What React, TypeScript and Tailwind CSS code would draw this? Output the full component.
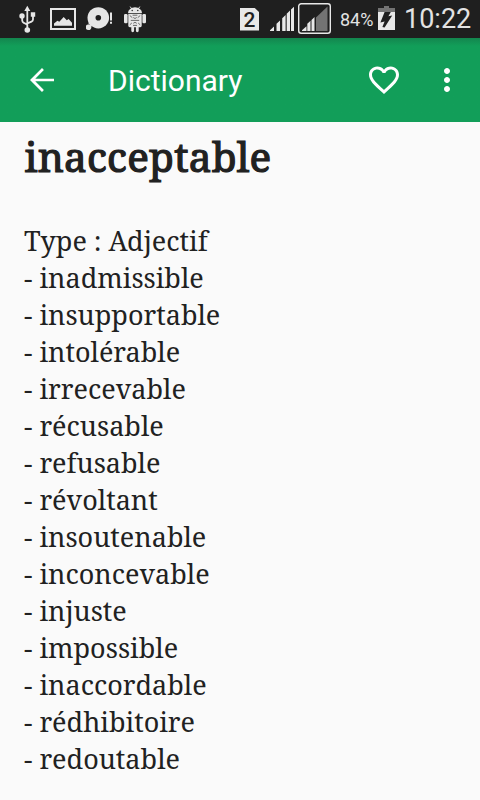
import React from "react";

const synonyms = [
  "inadmissible",
  "insupportable",
  "intolérable",
  "irrecevable",
  "récusable",
  "refusable",
  "révoltant",
  "insoutenable",
  "inconcevable",
  "injuste",
  "impossible",
  "inaccordable",
  "rédhibitoire",
  "redoutable",
];

function UsbIcon() {
  return (
    <svg className="ml-[18px] shrink-0" width="18" height="38" viewBox="18 0 18 38" fill="none" stroke="#e6e6e6" strokeWidth="1.8">
      <path d="M27.3 9v20M22.2 17v3.6q0 1.6 1.5 2.2l3.6 1.8M33 16v3.4q0 1.6-1.5 2.2l-4.2 1.8" />
      <path d="M27.3 5.8l3 5.2h-6z" fill="#e6e6e6" stroke="none" />
      <circle cx="22" cy="16" r="2.7" fill="#e6e6e6" stroke="none" />
      <circle cx="27.3" cy="30" r="2.8" fill="#e6e6e6" stroke="none" />
      <path d="M30.8 12.2h4.4v4.6h-4.4z" fill="#e6e6e6" stroke="none" />
    </svg>
  );
}

function PictureIcon() {
  return (
    <svg className="ml-[14px] shrink-0" width="26" height="38" viewBox="50 0 26 38" fill="#e6e6e6">
      <path fillRule="evenodd" d="M50 8h26v22H50zM52 10v18h22V10z" />
      <path d="M54 25.8v-2.4l3.4-2.6 1.9.9 4.4-4.7 3.1 3.2 1.8-1.2 3.4 3.7v3.1z" />
    </svg>
  );
}

function DiscIcon() {
  return (
    <svg className="ml-[10px] shrink-0" width="27" height="38" viewBox="86 0 27 38" fill="#e6e6e6">
      <ellipse cx="98.3" cy="17.8" rx="10.8" ry="10.6" />
      <circle cx="88.5" cy="27.2" r="2.8" />
      <path d="M88.6 18l2.7 6v3h-1.2v-2.5h-1.5z" />
      <circle cx="98.3" cy="17.8" r="2.8" fill="#1f1f1f" />
      <path d="M110 12.5h2v8h-2zM110 21.7h2v2h-2z" />
    </svg>
  );
}

function RobotIcon() {
  return (
    <svg className="ml-[11px] shrink-0" width="23" height="38" viewBox="124 0 23 38" fill="#e6e6e6">
      <path d="M128 13a7 5.8 0 0 1 14 0z" />
      <path d="M130.2 6.6l1.6 2.4M139.8 6.6l-1.6 2.4" stroke="#e6e6e6" strokeWidth="1" />
      <rect x="124" y="14" width="3.6" height="9.3" rx="1.2" />
      <rect x="142.4" y="14" width="3.6" height="9.3" rx="1.2" />
      <path d="M128.3 13.8h13.4v12q0 1.4-1.5 1.4h-1.5v3.6q0 1.4-1.4 1.4t-1.4-1.4v-3.6h-1.8v3.6q0 1.4-1.4 1.4t-1.4-1.4v-3.6h-1.5q-1.5 0-1.5-1.4z" />
      <circle cx="132.2" cy="10.5" r=".7" fill="#1f1f1f" />
      <circle cx="137.8" cy="10.5" r=".7" fill="#1f1f1f" />
      <path d="M129.8 15.5l2.5 2.2M140.2 15.5l-2.5 2.2M129.8 24.8l2-1.8M140.2 24.8l-2-1.8M132.6 15.2h4.8M130.8 20.4h8.4M133.3 17.5l1.7 1 1.7-1M133.3 23.3l1.7-1 1.7 1M133 25.4h4" stroke="#6a6a6a" strokeWidth="1" fill="none" />
    </svg>
  );
}

function SimIcon() {
  return (
    <div className="ml-auto flex h-[23px] w-[19px] items-center justify-center bg-[#e8e8e8] pt-[2px] text-[21px] leading-none font-medium text-[#1f1f1f] [clip-path:polygon(0_0,75%_0,100%_20%,100%_100%,0_100%)]">
      2
    </div>
  );
}

function SignalIcons() {
  return (
    <svg className="ml-[11px] shrink-0" width="61" height="38" viewBox="270 0 61 38">
      <path d="M270 31v-.8l4-3.6V31zM276.5 31v-7.3l3.5-3.3V31zM282.2 31V18.2l3.4-3.2v16zM286.7 31V13.8l3.3-3.2V31zM291 31V9.6l3-2.9V31z" fill="#e8e8e8" />
      <rect x="298.7" y="3.7" width="31.6" height="29.6" rx="2.5" fill="none" stroke="#e8e8e8" strokeWidth="1.4" />
      <path d="M316 31V17.5L327.5 6.5V31z" fill="#737373" />
      <path d="M302 31v-.8l4.5-4V31zM307.3 31v-7.3l3.2-3V31zM311.5 31V20l3-3v14z" fill="#e8e8e8" />
    </svg>
  );
}

function BatteryIcon() {
  return (
    <svg className="ml-[5px] shrink-0" width="17" height="38" viewBox="378 0 17 38">
      <path d="M378 12h17v18h-17z" fill="#e8e8e8" />
      <path d="M378 8h6V6h5v2h6v4h-17z" fill="#737373" />
      <path d="M384.6 12h6.2l-2.4 4.2 3.8-.6-7.6 11.9-2.2-.6 2.2-5.3-4.2.8z" fill="#1f1f1f" />
    </svg>
  );
}

function StatusBar() {
  return (
    <div className="flex h-[38px] shrink-0 items-center bg-[#1f1f1f] text-[#e3e3e3]">
      <UsbIcon />
      <PictureIcon />
      <DiscIcon />
      <RobotIcon />
      <SimIcon />
      <SignalIcons />
      <span className="ml-[9px] w-[33px] pt-[2px] text-[18px] leading-none whitespace-nowrap">84%</span>
      <BatteryIcon />
      <span className="ml-[9px] w-[76px] text-[27px] leading-none whitespace-nowrap">10:22</span>
    </div>
  );
}

function AppBar() {
  return (
    <header className="flex h-[84px] shrink-0 items-center bg-[#129e59] bg-linear-to-b from-[#13864e] to-[#129e59] to-[8px] text-white">
      <svg className="ml-6 size-9" viewBox="0 0 24 24" fill="currentColor">
        <path d="M20 11.15H7.5l5.75-5.75L12 4l-8 8 8 8 1.25-1.4L7.5 12.85H20z" />
      </svg>
      <h1 className="ml-12 pt-[2px] text-[30px] leading-none">Dictionary</h1>
      <svg className="ml-auto size-9" viewBox="0 0 24 24" fill="currentColor">
        <path d="M16.5 3c-1.74 0-3.41.81-4.5 2.09C10.91 3.81 9.24 3 7.5 3 4.42 3 2 5.42 2 8.5c0 3.78 3.4 6.86 8.55 11.54L12 21.35l1.45-1.32C18.6 15.36 22 12.28 22 8.5 22 5.42 19.58 3 16.5 3zm-4.4 15.55l-.1.1-.1-.1C7.14 14.24 4 11.39 4 8.5 4 6.5 5.5 5 7.5 5c1.54 0 3.04.99 3.57 2.36h1.87C13.46 5.99 14.96 5 16.5 5c2 0 3.5 1.5 3.5 3.5 0 2.89-3.14 5.74-7.9 10.05z" />
      </svg>
      <svg className="mr-[15px] ml-[27px] size-9" viewBox="0 0 24 24" fill="currentColor">
        <path d="M12 8c1.1 0 2-.9 2-2s-.9-2-2-2-2 .9-2 2 .9 2 2 2zm0 2c-1.1 0-2 .9-2 2s.9 2 2 2 2-.9 2-2-.9-2-2-2zm0 6c-1.1 0-2 .9-2 2s.9 2 2 2 2-.9 2-2-.9-2-2-2z" />
      </svg>
    </header>
  );
}

export default function App() {
  return (
    <div className="flex h-[800px] w-[480px] flex-col overflow-hidden bg-[#fafafa] font-['Roboto',sans-serif]">
      <StatusBar />
      <AppBar />
      <main className="px-6 font-['Noto_Serif','DejaVu_Serif_Condensed','DejaVu_Serif',serif] whitespace-nowrap text-[#212121]">
        <h2 className="pt-[6px] pl-[0.5px] text-[40.5px] leading-[57px] font-normal tracking-[0.2px] [-webkit-text-stroke:1.2px_#212121]">inacceptable</h2>
        <p className="mt-[37px] text-[27px] leading-[37px]">Type : Adjectif</p>
        <ul className="text-[27px] leading-[37px]">
          {synonyms.map((word) => (
            <li key={word}>- {word}</li>
          ))}
        </ul>
      </main>
    </div>
  );
}
